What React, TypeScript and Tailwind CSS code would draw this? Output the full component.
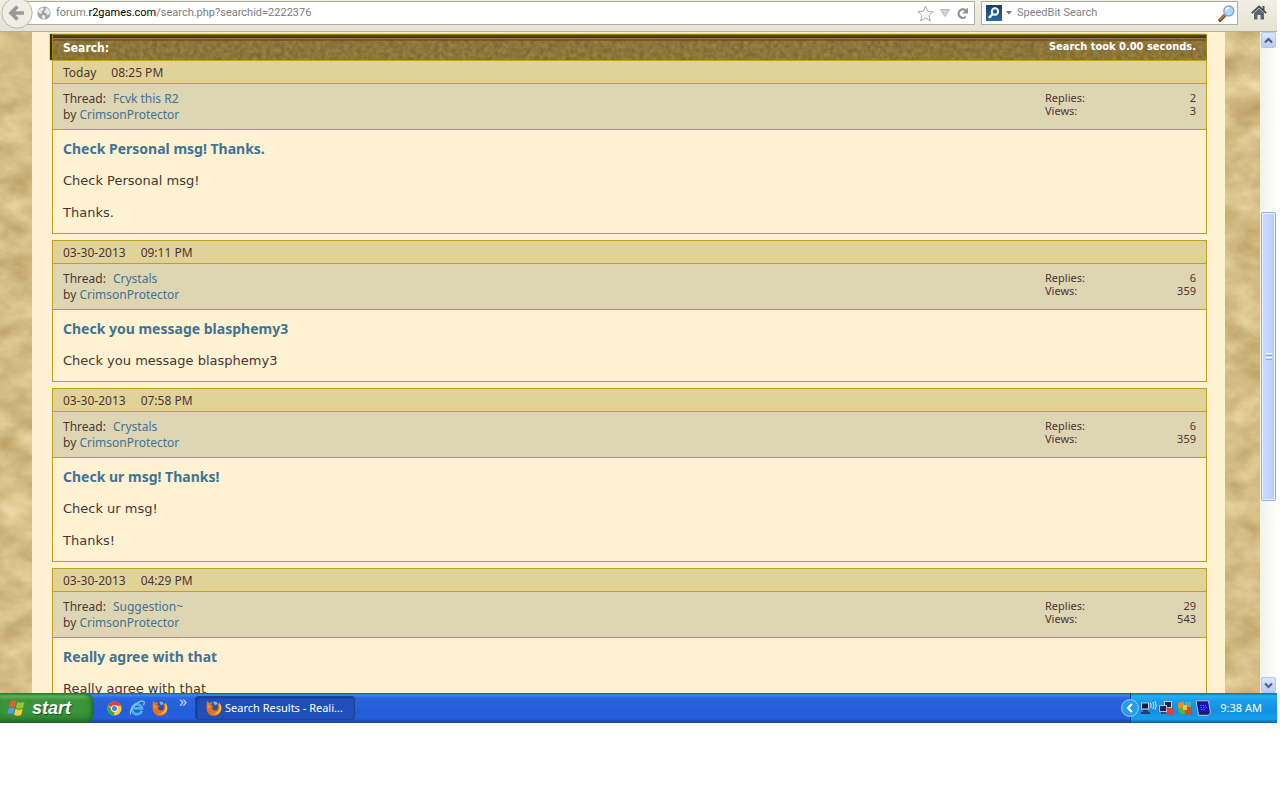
import type { ReactNode } from "react";

type Post = {
  date: string;
  time: string;
  thread: string;
  author: string;
  replies: number;
  views: number;
  title: string;
  body: string[];
};

const posts: Post[] = [
  { date: "Today", time: "08:25 PM", thread: "Fcvk this R2", author: "CrimsonProtector", replies: 2, views: 3, title: "Check Personal msg! Thanks.", body: ["Check Personal msg!", "Thanks."] },
  { date: "03-30-2013", time: "09:11 PM", thread: "Crystals", author: "CrimsonProtector", replies: 6, views: 359, title: "Check you message blasphemy3", body: ["Check you message blasphemy3"] },
  { date: "03-30-2013", time: "07:58 PM", thread: "Crystals", author: "CrimsonProtector", replies: 6, views: 359, title: "Check ur msg! Thanks!", body: ["Check ur msg!", "Thanks!"] },
  { date: "03-30-2013", time: "04:29 PM", thread: "Suggestion~", author: "CrimsonProtector", replies: 29, views: 543, title: "Really agree with that", body: ["Really agree with that"] },
];

function Parchment() {
  return (
    <svg className="absolute inset-0 h-full w-full" aria-hidden="true">
      <filter id="parchment" x="0" y="0" width="100%" height="100%" colorInterpolationFilters="sRGB">
        <feTurbulence type="fractalNoise" baseFrequency="0.03 0.045" numOctaves="6" seed="21" />
        <feColorMatrix values="0.24 0 0 0 0.71  0.28 0 0 0 0.6  0.32 0 0 0 0.36  0 0 0 0 1" />
      </filter>
      <rect width="100%" height="100%" filter="url(#parchment)" />
    </svg>
  );
}

function LeatherTexture() {
  return (
    <svg className="absolute inset-0 h-full w-full" aria-hidden="true">
      <filter id="leather" x="0" y="0" width="100%" height="100%" colorInterpolationFilters="sRGB">
        <feTurbulence type="fractalNoise" baseFrequency="0.22" numOctaves="4" seed="3" />
        <feColorMatrix values="0.18 0 0 0 0.46  0.18 0 0 0 0.37  0.14 0 0 0 0.155  0 0 0 0 1" />
      </filter>
      <rect width="100%" height="100%" filter="url(#leather)" />
      <rect width="100%" height="2" fill="#54400a" />
      <rect y="2" width="100%" height="1" fill="#4a2f14" />
      <rect y="3" width="100%" height="1" fill="#957a58" />
      <rect y="4" width="100%" height="2" fill="#5c4212" opacity=".5" />
    </svg>
  );
}

function BackIcon() {
  return (
    <svg className="h-[32px] w-[32px]" viewBox="0 0 32 32" aria-hidden="true">
      <circle cx="16" cy="13" r="15.2" fill="#f0eee3" stroke="#b9b7ab" />
      <path d="M23 13H11M16.5 6.5L10 13l6.500 6.500" fill="none" stroke="#999" strokeWidth="3.600" />
    </svg>
  );
}

function GlobeIcon() {
  return (
    <svg className="h-[14px] w-[14px]" viewBox="0 0 14 14" aria-hidden="true">
      <circle cx="7" cy="7" r="6.600" fill="#a2a3a6" />
      <path d="M2 3.500L5 1.200l2 .8-.6 2L4.600 5 5 7 3.400 8 1 6zM8 2l3 .6 2 3-.6 3-2 .6-1-2-2-.6.200-2 1.400-1zM5 9l3 .6.600 1.600-2 2L5 12z" fill="#e9e9ea" />
    </svg>
  );
}

function StarIcon() {
  return (
    <svg className="h-[17px] w-[17px]" viewBox="0 0 17 17" aria-hidden="true">
      <path d="M8.500 1l2.200 5.200 5.500.5-4.100 3.700 1.200 5.500-4.800-2.900-4.800 2.900 1.200-5.500L.800 6.700l5.500-.5z" fill="#fdfdfd" stroke="#a9a9ad" strokeLinejoin="round" />
    </svg>
  );
}

function ReloadIcon() {
  return (
    <svg className="h-[13px] w-[13px]" viewBox="0 0 13 13" aria-hidden="true">
      <path d="M9.700 3.300A4.300 4.300 0 1 0 9.800 9.800" fill="none" stroke="#8d929c" strokeWidth="2.200" />
      <path d="M12 .5v6H6.300z" fill="#8d929c" />
    </svg>
  );
}

function SpeedBitIcon() {
  return (
    <svg className="h-[16px] w-[16px]" viewBox="0 0 16 16" aria-hidden="true">
      <defs>
        <linearGradient id="sb" x2="0" y2="1">
          <stop stopColor="#123e6c" />
          <stop offset="1" stopColor="#2a6ba2" />
        </linearGradient>
      </defs>
      <rect width="16" height="16" fill="url(#sb)" />
      <circle cx="9" cy="6.500" r="3.200" fill="#245f94" stroke="#fff" strokeWidth="2" />
      <path d="M6.500 9L3 13" stroke="#fff" strokeWidth="2.400" />
    </svg>
  );
}

function MagnifierIcon() {
  return (
    <svg className="h-[17px] w-[17px]" viewBox="0 0 17 17" aria-hidden="true">
      <path d="M7 10L2 15.200" stroke="#6d4630" strokeWidth="3.400" strokeLinecap="round" />
      <path d="M7 9.500L2 14.500" stroke="#c98148" strokeWidth="1.600" strokeLinecap="round" />
      <circle cx="10.800" cy="6" r="5" fill="#a9dcfa" stroke="#8ba3bb" strokeWidth="1.300" />
      <path d="M7.800 5.500a3.200 3.200 0 0 1 3.500-2.600" stroke="#fff" strokeWidth="1.500" fill="none" />
    </svg>
  );
}

function HomeIcon() {
  return (
    <svg className="h-[15px] w-[16px]" viewBox="0 0 16 15" aria-hidden="true">
      <path d="M11.500 1h2v4h-2z" fill="#4b535c" />
      <path d="M3 8l5-4.800L13 8v6.500H9.500V10h-3v4.500H3z" fill="#5d6670" />
      <path d="M.8 8.200L8 1.400l7.200 6.800" fill="none" stroke="#3f474f" strokeWidth="1.800" />
    </svg>
  );
}

function Chevron({ down }: { down?: boolean }) {
  return (
    <svg className="h-[7px] w-[9px]" viewBox="0 0 9 7" aria-hidden="true">
      <path d={down ? "M1 1.500l3.500 3.500L8 1.500" : "M1 5.500L4.500 2 8 5.500"} fill="none" stroke="#4d6185" strokeWidth="2.200" />
    </svg>
  );
}

function WindowsFlag() {
  return (
    <svg className="h-[18px] w-[19px]" viewBox="0 0 19 18" aria-hidden="true">
      <path d="M3.500 2.500Q6.500.500 9.300 2.300L7.800 8.300Q5 6.800 2 8.300z" fill="#ee5a2c" />
      <path d="M10.300 2.900q3 1.700 7.200.1L16 9q-4 1.500-7.200-.2z" fill="#8ccc3c" />
      <path d="M1.700 9.300q3-1.600 5.900 0L6.200 15Q3.300 13.500.300 15z" fill="#5b93ee" />
      <path d="M8.600 9.800q3 1.800 7.100.3l-1.500 6q-4 1.500-7.100-.4z" fill="#fccb35" />
    </svg>
  );
}

function ChromeIcon() {
  return (
    <svg className="h-[15px] w-[15px]" viewBox="0 0 16 16" aria-hidden="true">
      <circle cx="8" cy="8" r="7.500" fill="#f7cf3a" />
      <path d="M8 8L1.300 4.600A7.500 7.500 0 0 1 14.800 5H8z" fill="#e0402f" />
      <path d="M8 8l-.5 7.500A7.500 7.500 0 0 1 1.300 4.600L5 9z" fill="#3fa84a" />
      <circle cx="8" cy="8" r="3.600" fill="#fff" />
      <circle cx="8" cy="8" r="2.700" fill="#4083dc" />
    </svg>
  );
}

function ExplorerIcon() {
  return (
    <svg className="h-[16px] w-[16px]" viewBox="0 0 16 16" aria-hidden="true">
      <path d="M12.800 10.800A5 5 0 1 1 13 8.400H5" fill="none" stroke="#4fb0ee" strokeWidth="2.800" />
      <path d="M2 14.500C-1.500 12 8 .5 14 1.200c2 .3 1.300 2.600.4 4" fill="none" stroke="#8fcff6" strokeWidth="1.200" />
    </svg>
  );
}

function FirefoxIcon() {
  return (
    <svg className="h-[16px] w-[16px]" viewBox="0 0 16 16" aria-hidden="true">
      <circle cx="8.500" cy="6.500" r="6" fill="#2b549e" />
      <path d="M7 2q3-1.500 5 1.500l-3 2z" fill="#75b5e6" />
      <path d="M1.200 1L3.500 2.800q1.500-.8 3-.3L5 5l2.500 1L5.800 8q.8 3 4 2.500 3-.8 2.200-4.500l-1-2.500q4.500 1.200 4.500 5.500A7.400 7.200 0 0 1 .600 8.500Q.300 4.500 1.200 1z" fill="#e8701e" />
      <path d="M13 2.500q3.800 4 1.400 8.500-3 4.300-8.300 3 6-.6 7.300-5.500z" fill="#fbc63c" />
      <path d="M1.600 3.500Q2 6 4.500 6.300L3.200 9Q1 7 1.600 3.500z" fill="#f59a2b" />
    </svg>
  );
}

function WirelessIcon() {
  return (
    <svg className="h-[16px] w-[17px]" viewBox="0 0 17 16" aria-hidden="true">
      <path d="M1 2.500h8v7H1z" fill="#c6cbd6" />
      <path d="M2 3.500h6v5H2z" fill="#101b44" />
      <path d="M3 10h5v2H3zM1 12h9v2H1z" fill="#2a3a62" />
      <path d="M10.500 3q1.500 2.500 0 5M12.800 2q2.200 3.500 0 7M15 1q2.500 4.500 0 9" fill="none" stroke="#dceafc" />
    </svg>
  );
}

function NetworkOffIcon() {
  return (
    <svg className="h-[16px] w-[16px]" viewBox="0 0 16 16" aria-hidden="true">
      <path d="M5 1h8v7H5z" fill="#c6cbd6" />
      <path d="M6 2h6v5H6z" fill="#18265c" />
      <path d="M0 5h8v7H0z" fill="#b9bfce" />
      <path d="M1 6h6v5H1z" fill="#18265c" />
      <path d="M2 12h5v2H2z" fill="#35456d" />
      <path d="M8 8l6.500 6.500M14.500 8L8 14.500" stroke="#ef3a33" strokeWidth="2.800" />
    </svg>
  );
}

function PeopleIcon() {
  return (
    <svg className="h-[16px] w-[16px]" viewBox="0 0 16 16" aria-hidden="true">
      <path d="M1 3l2-1 1 1 1-2 2 1v6H1z" fill="#f08a22" />
      <path d="M8 2h6v5H8z" fill="#4bb4a4" />
      <path d="M1 8h7v6H3z" fill="#67ad3a" />
      <path d="M8 7h7v8l-7-1z" fill="#c9502b" />
      <path d="M6 5h4v5H6z" fill="#f7bd3c" />
    </svg>
  );
}

function ScreenIcon() {
  return (
    <svg className="h-[16px] w-[16px]" viewBox="0 0 16 16" aria-hidden="true">
      <path d="M1 .8h12.500l2 12-2 2.500H3.500z" fill="#1a1b63" stroke="#b9c4ec" />
      <path d="M3 2.500h9.500l1.300 9.500H4.500z" fill="#1414c4" />
      <path d="M5 5.500h6M5.500 7.500h6.500M6 9.500h5" stroke="#5f72f1" strokeDasharray="1.500 1" />
    </svg>
  );
}

function BrowserBar() {
  return (
    <header className="relative z-10 flex h-[32px] shrink-0 items-start border-b border-[#b3b0a2] bg-linear-to-b from-[#f1efe6] to-[#e6e3d5] pt-px font-[Roboto,sans-serif] text-[11px]">
      <button type="button" aria-label="Back" className="z-10 -mt-px ml-px h-[31px] w-[32px] shrink-0">
        <BackIcon />
      </button>
      <div className="-ml-[8px] flex h-[24px] flex-1 items-center border border-[#aeaca0] bg-white pr-[5px] pl-[11px]">
        <GlobeIcon />
        <a href="#url" className="ml-[5px] flex-1 pt-px text-[#7b7b7b]">
          forum.<span className="text-black">r2games.com</span>/search.php?searchid=2222376
        </a>
        <button type="button" aria-label="Bookmark this page"><StarIcon /></button>
        <button type="button" aria-label="Show history" className="mx-[6px]">
          <svg className="h-[8px] w-[10px]" viewBox="0 0 10 8" aria-hidden="true">
            <path d="M.5.5h9L5 7.500z" fill="#d2d2da" stroke="#b4b4bd" />
          </svg>
        </button>
        <button type="button" aria-label="Reload"><ReloadIcon /></button>
      </div>
      <form className="ml-[6px] flex h-[24px] w-[257px] items-center border border-[#aeaca0] bg-white pr-[2px] pl-[4px]">
        <button type="button" aria-label="Choose search engine" className="flex items-center gap-[4px]">
          <SpeedBitIcon />
          <svg className="h-[4px] w-[6px]" viewBox="0 0 6 4" aria-hidden="true"><path d="M0 0h6L3 3.500z" fill="#777" /></svg>
        </button>
        <input type="text" aria-label="Search" placeholder="SpeedBit Search" className="ml-[5px] min-w-0 flex-1 bg-transparent pt-px outline-none placeholder:text-[#7f7f88]" />
        <button type="submit" aria-label="Go"><MagnifierIcon /></button>
      </form>
      <button type="button" aria-label="Home" className="mt-[4px] mr-[10px] ml-[13px]"><HomeIcon /></button>
    </header>
  );
}

function PostBlock({ post }: { post: Post }) {
  return (
    <li className="mb-[6px] border border-[#bf9f20] bg-[#fef2d2]">
      <div className="flex h-[23px] items-center gap-[15px] border-b border-[#bf9f20] bg-[#e1d298] px-[10px] pt-[2px] text-[12px]">
        <span>{post.date}</span>
        <span>{post.time}</span>
      </div>
      <div className="flex justify-between border-b border-[#bf9f20] bg-[#ded5b3] px-[10px] pt-[7px] pb-[6px] text-[12px] leading-[16px]">
        <div>
          <h3 className="flex gap-[7px]">Thread: <a href="#thread" className="text-[#417394]">{post.thread}</a></h3>
          <p>by <a href="#member" className="text-[#417394]">{post.author}</a></p>
        </div>
        <dl className="grid w-[151px] grid-cols-2 content-start text-[11px] leading-[13px]">
          <dt>Replies:</dt>
          <dd className="text-right">{post.replies}</dd>
          <dt>Views:</dt>
          <dd className="text-right">{post.views}</dd>
        </dl>
      </div>
      <div className="flex flex-col gap-[16px] px-[10px] pt-[11px] pb-[12px] leading-[16px]">
        <h2 className="text-[14px] font-bold"><a href="#post" className="text-[#417394]">{post.title}</a></h2>
        {post.body.map((line) => (
          <p key={line} className="font-['DejaVu_Sans',sans-serif] text-[13px]">{line}</p>
        ))}
      </div>
    </li>
  );
}

function ScrollButton({ label, children }: { label: string; children: ReactNode }) {
  return (
    <button type="button" aria-label={label} className="flex h-[16px] shrink-0 items-center justify-center rounded-[2px] border border-[#b3c5f0] bg-linear-to-b from-[#dbe6fe] to-[#b9cbf6]">
      {children}
    </button>
  );
}

function ScrollBar() {
  return (
    <div className="relative flex w-[17px] shrink-0 flex-col bg-linear-to-r from-[#f2f1ec] to-[#fefefb] px-px">
      <ScrollButton label="Scroll up"><Chevron /></ScrollButton>
      <div className="grow-[165] basis-0" />
      <div className="flex grow-[287] basis-0 flex-col items-center justify-center gap-px rounded-[2px] border border-[#93acea] bg-linear-to-r from-[#cbdafe] to-[#b9cdfb] shadow-[inset_0_0_0_1px_#e9f0ff]">
        <span className="h-px w-[6px] bg-white" />
        <span className="h-px w-[6px] bg-[#8ca9ea]" />
        <span className="h-px w-[6px] bg-white" />
        <span className="h-px w-[6px] bg-[#8ca9ea]" />
      </div>
      <div className="grow-[177] basis-0" />
      <ScrollButton label="Scroll down"><Chevron down /></ScrollButton>
    </div>
  );
}

function TaskBar() {
  return (
    <footer className="flex h-[30px] shrink-0 items-stretch bg-[linear-gradient(#1f4fb5_0,#3f85f3_2px,#2a66e0_5px,#245cd8_18px,#2560e0_25px,#1a429c_100%)] font-['Noto_Sans',sans-serif] text-[11px] text-white">
      <button type="button" className="flex w-[94px] items-center gap-[6px] rounded-r-[9px] bg-[linear-gradient(#2f7a2e_0,#63b35f_3px,#3c9239_7px,#37963a_20px,#2f8230_26px,#235f24_100%)] pl-[7px] font-['Liberation_Sans',sans-serif] text-[18px] font-bold text-white italic shadow-[inset_-3px_0_4px_#226b24] text-shadow-[1px_1px_1px_#1d4f1e]">
        <WindowsFlag />
        start
      </button>
      <nav aria-label="Quick launch" className="flex w-[101px] items-center gap-[7px] pl-[13px]">
        <button type="button" aria-label="Chrome"><ChromeIcon /></button>
        <button type="button" aria-label="Internet Explorer"><ExplorerIcon /></button>
        <button type="button" aria-label="Firefox"><FirefoxIcon /></button>
        <button type="button" aria-label="More" className="ml-[4px] self-start text-[16px] leading-[16px] text-[#c4dafc]">»</button>
      </nav>
      <button type="button" className="my-[3px] flex w-[160px] items-center gap-[3px] rounded-[3px] border border-[#1c439a] bg-[#1f4fba] pl-[10px] shadow-[inset_1px_1px_2px_#153a88]">
        <FirefoxIcon />
        Search Results - Reali...
      </button>
      <div className="ml-auto flex w-[147px] items-center border-l border-[#0f3c98] bg-[linear-gradient(#0f68c0_0,#1fb1f2_3px,#179be9_8px,#138fe4_18px,#16a0ec_26px,#0b61b0_100%)]">
        <button type="button" aria-label="Show hidden icons" className="-ml-[10px] shrink-0">
          <svg className="h-[18px] w-[18px]" viewBox="0 0 18 18" aria-hidden="true">
            <circle cx="9" cy="9" r="8.400" fill="#2a9be6" stroke="#8fd0f8" />
            <path d="M10.800 5L7 9l3.800 4" fill="none" stroke="#fff" strokeWidth="2" />
          </svg>
        </button>
        <div className="flex flex-1 items-center gap-[2px] pl-px">
          <WirelessIcon />
          <NetworkOffIcon />
          <PeopleIcon />
          <ScreenIcon />
        </div>
        <time className="pr-[15px] whitespace-nowrap">9:38 AM</time>
      </div>
    </footer>
  );
}

export default function App() {
  return (
    <div className="h-screen bg-white pr-[3px] pb-[77px]">
      <div className="flex h-full flex-col">
        <BrowserBar />
        <div className="flex min-h-0 flex-1">
          <div className="relative min-w-0 flex-1 overflow-hidden pr-[35px] pl-[32px]">
            <Parchment />
            <main className="relative min-h-full bg-[#fef2d2] px-[20px] pt-[2px] pr-[18px] font-['Noto_Sans',sans-serif] text-[#4a3535]">
              <div className="relative flex h-[26px] items-center justify-between border border-b-0 border-[#9c8410] px-[10px] font-['DejaVu_Sans_Condensed',sans-serif] text-[11px] font-bold text-white shadow-[-2px_0_1px_#3d300f]">
                <LeatherTexture />
                <h1 className="relative text-[12px]">Search:</h1>
                <p className="relative">Search took 0.00 seconds.</p>
              </div>
              <ol className="relative">
                {posts.map((post) => <PostBlock key={post.date + post.time} post={post} />)}
              </ol>
            </main>
          </div>
          <ScrollBar />
        </div>
        <TaskBar />
      </div>
    </div>
  );
}
